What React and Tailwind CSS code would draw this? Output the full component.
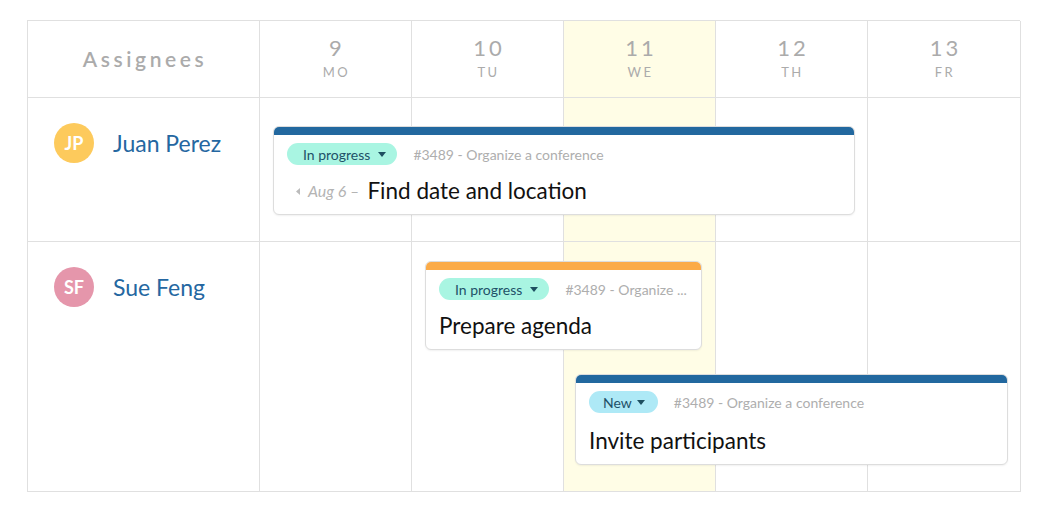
import React from 'react';

const days = [
  { num: '9', abbr: 'MO', col: 'col-start-2' },
  { num: '10', abbr: 'TU', col: 'col-start-3' },
  { num: '11', abbr: 'WE', col: 'col-start-4', today: true },
  { num: '12', abbr: 'TH', col: 'col-start-5' },
  { num: '13', abbr: 'FR', col: 'col-start-6' },
];

const people = [
  { initials: 'JP', name: 'Juan Perez', color: 'bg-[#fdca5c]', h: 'h-[144px]', row: 'row-start-2' },
  { initials: 'SF', name: 'Sue Feng', color: 'bg-[#e596ab]', h: 'h-[250px]', row: 'row-start-3' },
];

const Pill = ({ label, isNew }) => (
  <span
    className={
      isNew
        ? 'flex items-center whitespace-nowrap h-[22px] pl-[14px] pr-[13px] rounded-full bg-[#aee9f6] text-[14px] text-[#1e5168]'
        : 'flex items-center whitespace-nowrap h-[22px] pl-[16px] pr-[11px] rounded-full bg-[#a9f5e2] text-[14px] text-[#1e5168]'
    }
  >
    {label}
    <svg width="8" height="5" viewBox="0 0 8 5" className={isNew ? 'ml-[5px]' : 'ml-[8px]'}>
      <path d="M0 0h8L4 5z" fill="#1d4f60" />
    </svg>
  </span>
);

const TaskCard = ({ bar, pill, isNew, project, title, from, className, gap = 'mt-[12px]' }) => (
  <div
    className={`self-start bg-white rounded-md overflow-hidden border border-[#dddddd] shadow-[0_1px_2px_rgba(0,0,0,0.06)] ${className}`}
  >
    <div className={`h-[8px] ${bar}`} />
    <div className="px-[13px] pt-[8px] pb-[9px]">
      <div className="flex items-center gap-[16px]">
        <Pill label={pill} isNew={isNew} />
        <span className="text-[14px] text-[#aeaeae] whitespace-nowrap">{project}</span>
      </div>
      <div className={`flex items-center h-[28px] ${gap}`}>
        {from && (
          <span className="flex items-center mr-[8px] ml-[9px] text-[16px] italic text-[#b4b4b4] whitespace-nowrap">
            <svg width="4" height="7" viewBox="0 0 4 7" className="mr-[8px]">
              <path d="M4 0v7L0 3.5z" fill="#bbbbbb" />
            </svg>
            {from} –
          </span>
        )}
        <span className="text-[22.5px] text-[#111111] whitespace-nowrap">{title}</span>
      </div>
    </div>
  </div>
);

const App = () => {
  return (
    <div className="min-h-screen bg-white pt-[20px] pl-[27px] font-['Lato',sans-serif]">
      <div className="grid grid-cols-[232px_152px_152px_152px_152px_153px] w-[993px] border-l border-t border-[#e0e0e0]">
        {/* header */}
        <div className="row-start-1 col-start-1 h-[77px] border-r border-b border-[#e0e0e0] flex items-center justify-center">
          <span className="text-[21px] font-semibold tracking-[3.6px] text-[#ababab] pl-[3px] mt-[-1px]">Assignees</span>
        </div>
        {days.map((d) => (
          <div
            key={d.num}
            className={`row-start-1 ${d.col} h-[77px] border-r border-b border-[#e0e0e0] flex flex-col items-center pt-[14px] ${
              d.today ? 'bg-[#fffde6]' : ''
            }`}
          >
            <span className="text-[22px] leading-[26px] tracking-[3px] text-[#ababab] pl-[3px]">{d.num}</span>
            <span className="text-[13px] leading-[16px] tracking-[2.5px] text-[#ababab] pl-[2px] mt-[3px]">{d.abbr}</span>
          </div>
        ))}

        {/* rows */}
        {people.map((p) => (
          <React.Fragment key={p.name}>
            <div className={`${p.h} ${p.row} col-start-1 border-r border-b border-[#e0e0e0] flex items-start pl-[26px] pt-[25px]`}>
              <div className={`w-[40px] h-[40px] rounded-full ${p.color} flex items-center justify-center text-white font-bold text-[18px]`}>
                {p.initials}
              </div>
              <span className="ml-[19px] text-[23px] leading-[40px] text-[#2567a1]">{p.name}</span>
            </div>
            {days.map((d) => (
              <div
                key={d.num}
                className={`${p.h} ${p.row} ${d.col} border-r border-b border-[#e0e0e0] ${d.today ? 'bg-[#fffde6]' : ''}`}
              />
            ))}
          </React.Fragment>
        ))}

        {/* tasks for Juan */}
        <TaskCard
          className="row-start-2 col-start-2 col-span-4 ml-[13px] mr-[13px] mt-[28px]"
          bar="bg-[#22689f]"
          pill="In progress"
          project="#3489 - Organize a conference"
          from="Aug 6"
          title="Find date and location"
        />

        {/* tasks for Sue */}
        <div className="row-start-3 col-start-2 col-span-5 self-start grid grid-cols-[152px_152px_152px_152px_153px] pt-[19px]">
          <TaskCard
            className="col-start-2 col-span-2 ml-[13px] mr-[14px]"
            bar="bg-[#fbab48]"
            pill="In progress"
            project="#3489 - Organize ..."
            title="Prepare agenda"
          />
          <TaskCard
            className="col-start-3 col-span-3 ml-[11px] mr-[13px] mt-[24px]"
            bar="bg-[#22689f]"
            pill="New"
            isNew
            gap="mt-[14px]"
            project="#3489 - Organize a conference"
            title="Invite participants"
          />
        </div>
      </div>
    </div>
  );
};

export default App;
